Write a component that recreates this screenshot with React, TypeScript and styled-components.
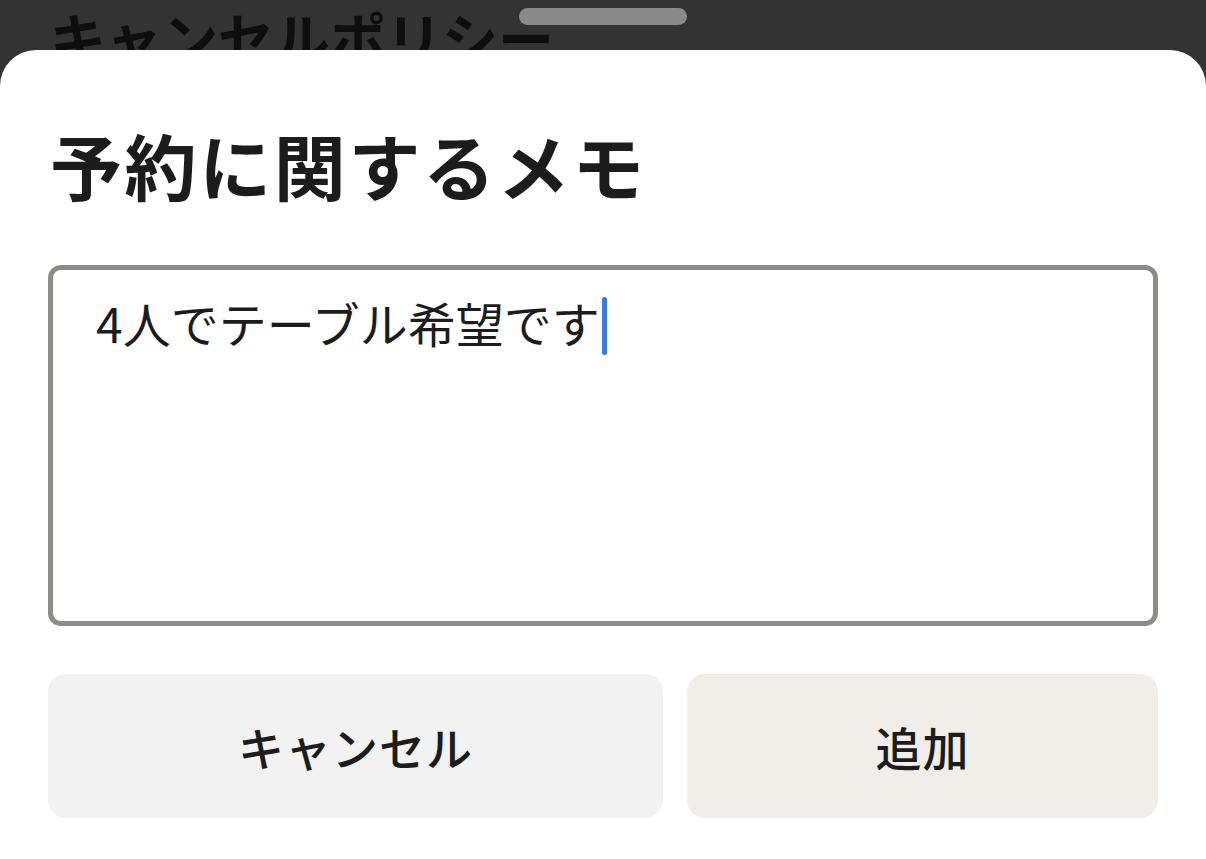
import * as React from "react";
import styled, { createGlobalStyle } from "styled-components";

const GlobalStyle = createGlobalStyle`
  html, body {
    margin: 0;
    padding: 0;
    background: #333333;
    font-family: "Noto Sans CJK JP", "Noto Sans", sans-serif;
  }
`;

const Screen = styled.div`
  position: relative;
  width: 1206px;
  height: 859px;
  display: flex;
  flex-direction: column;
  overflow: hidden;
  background: #333333;
`;

const Backdrop = styled.div`
  height: 50px;
  overflow: hidden;
  padding: 0 0 0 50px;
  box-sizing: border-box;
`;

const BehindTitle = styled.h2`
  margin: 0;
  padding-top: 2px;
  font-size: 56px;
  font-weight: 700;
  line-height: 1.2;
  color: #0e0e0e;
  white-space: nowrap;
`;

const Handle = styled.div`
  position: absolute;
  top: 8px;
  left: 50%;
  transform: translateX(-50%);
  width: 168px;
  height: 17px;
  border-radius: 9px;
  background: #8a8a8a;
`;

const Sheet = styled.section`
  flex: 1;
  background: #ffffff;
  border-radius: 36px 36px 0 0;
  padding: 0 48px;
  display: flex;
  flex-direction: column;
`;

const Title = styled.h1`
  margin: 78px 0 0 2px;
  font-size: 72px;
  font-weight: 700;
  line-height: 1;
  color: #1c1c1c;
  letter-spacing: 2.6px;
`;

const MemoBox = styled.div`
  margin-top: 65px;
  height: 361px;
  box-sizing: border-box;
  border: 5px solid #8e8c86;
  border-radius: 13px;
  padding: 21px 43px;
`;

const MemoText = styled.span`
  font-size: 48px;
  font-weight: 400;
  line-height: 1.3;
  color: #1c1c1c;
`;

const Caret = styled.span`
  display: inline-block;
  width: 5px;
  height: 58px;
  margin-left: 2px;
  border-radius: 3px;
  background: #3a7ae6;
  vertical-align: -12px;
`;

const ButtonRow = styled.div`
  margin-top: 48px;
  display: grid;
  grid-template-columns: 615fr 471fr;
  gap: 24px;
`;

const ActionButton = styled.button<{ $tone: "grey" | "beige" }>`
  height: 144px;
  border: none;
  border-radius: 18px;
  background: ${(p) => (p.$tone === "grey" ? "#f2f2f2" : "#f1eee9")};
  font-family: "Noto Sans CJK JP", "Noto Sans", sans-serif;
  font-size: 46px;
  font-weight: 500;
  color: #1c1c1c;
  letter-spacing: 1px;
  cursor: pointer;
`;

const App = () => {
  return (
    <>
      <GlobalStyle />
      <Screen>
        <Backdrop>
          <BehindTitle>キャンセルポリシー</BehindTitle>
        </Backdrop>
        <Handle />
        <Sheet>
          <Title>予約に関するメモ</Title>
          <MemoBox>
            <MemoText>4人でテーブル希望です</MemoText>
            <Caret />
          </MemoBox>
          <ButtonRow>
            <ActionButton $tone="grey">キャンセル</ActionButton>
            <ActionButton $tone="beige">追加</ActionButton>
          </ButtonRow>
        </Sheet>
      </Screen>
    </>
  );
};

export default App;
